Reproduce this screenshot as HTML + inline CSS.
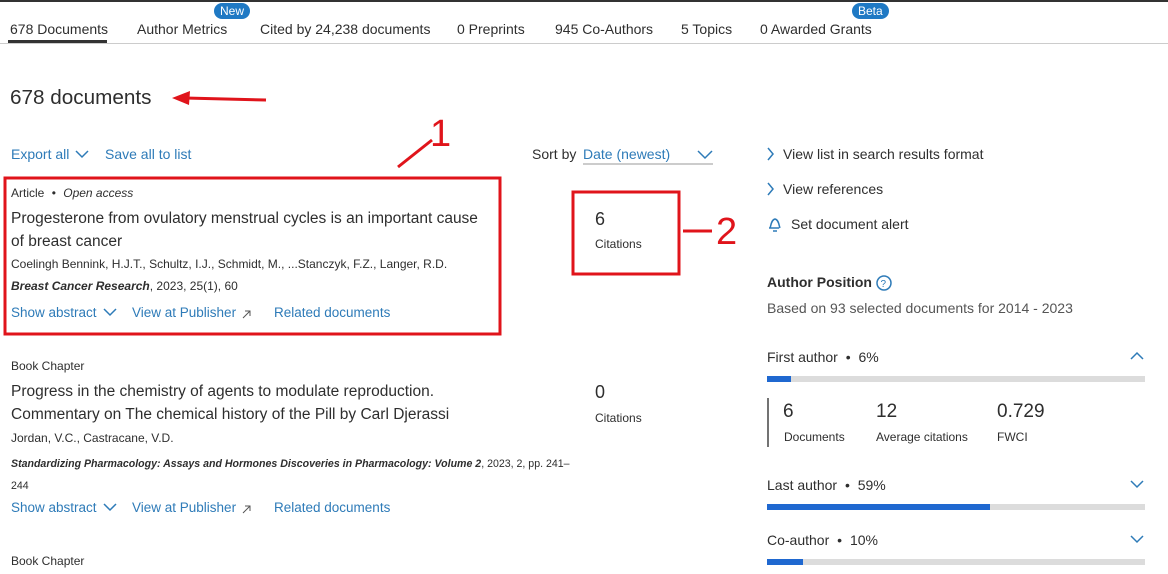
<!DOCTYPE html>
<html><head><meta charset="utf-8"><style>
*{margin:0;padding:0;box-sizing:border-box}
body{width:1168px;height:574px;overflow:hidden;background:#fff;font-family:"Liberation Sans",sans-serif;color:#2e2e2e;position:relative}
.a{position:absolute;white-space:nowrap}
.b{color:#2e7bb8}
.s13{font-size:13px}.s12{font-size:12px}.s14{font-size:14px}
.bar{position:absolute;height:6px;background:#dcdcdc;left:767px;width:378px}
.bar i{display:block;height:6px;background:#1f68d0}
.badge{position:absolute;background:#1f79c4;color:#fff;font-size:12px;border-radius:10px;padding:1px 6px;top:3px}
</style></head><body>
<div class="a" style="left:0;top:0;width:1168px;height:2px;background:#333"></div>
<div class="a s14" style="left:10px;top:21px">678 Documents</div>
<div class="a" style="left:8px;top:40px;width:99px;height:3px;background:#333"></div>
<div class="a s14" style="left:137px;top:21px">Author Metrics</div>
<div class="badge" style="left:214px">New</div>
<div class="a s14" style="left:260px;top:21px">Cited by 24,238 documents</div>
<div class="a s14" style="left:457px;top:21px">0 Preprints</div>
<div class="a s14" style="left:555px;top:21px">945 Co-Authors</div>
<div class="a s14" style="left:681px;top:21px">5 Topics</div>
<div class="a s14" style="left:760px;top:21px">0 Awarded Grants</div>
<div class="badge" style="left:852px">Beta</div>
<div class="a" style="left:0;top:43px;width:1168px;height:1px;background:#ccc"></div>

<div class="a" style="left:10px;top:86px;font-size:20.7px">678 documents</div>
<svg class="a" style="left:0;top:0" width="1168" height="574">
<g stroke="#e0141b" stroke-width="3" fill="#e0141b">
<line x1="266" y1="100" x2="185" y2="98"/><polygon points="172,98 190,91 189,105" stroke="none"/>
<line x1="398" y1="167" x2="432" y2="140"/>
<line x1="683" y1="231" x2="712" y2="231"/>
</g>
<rect x="5" y="178" width="495" height="156" fill="none" stroke="#e0141b" stroke-width="3"/>
<rect x="573" y="192" width="106" height="82" fill="none" stroke="#e0141b" stroke-width="3"/>
<text x="430" y="146" font-size="38" fill="#e0141b" font-family="Liberation Sans">1</text>
<text x="716" y="244" font-size="38" fill="#e0141b" font-family="Liberation Sans">2</text>
<g fill="none" stroke="#2e7bb8" stroke-width="1.5">
<polyline points="76,151 82,157 88,151"/>
<polyline points="104,309 110,315 116,309"/>
<polyline points="104,504 110,510 116,504"/>
<polyline points="698,151 705,158 712,151"/>
<polyline points="768,148 773,154 768,160"/>
<polyline points="768,183 773,189 768,195"/>
<path d="M769 228h10M770 228c1-2 1-8 5-9 4 1 4 7 5 9M773 231h4"/>
<polyline points="1131,359 1137,353 1143,359"/>
<polyline points="1131,481 1137,487 1143,481"/>
<polyline points="1131,536 1137,542 1143,536"/>
<circle cx="884" cy="283" r="7"/>
</g>
<g fill="none" stroke="#555" stroke-width="1"><path d="M243 318l7-7M245 311h5v5"/><path d="M243 513l7-7M245 506h5v5"/></g>
<text x="880.5" y="287" font-size="10" fill="#2e7bb8" font-family="Liberation Sans">?</text>
<line x1="583" y1="164" x2="713" y2="164" stroke="#999"/>
<line x1="768" y1="398" x2="768" y2="447" stroke="#444" stroke-width="1.5"/>
</svg>

<div class="a s14 b" style="left:11px;top:146px">Export all</div>
<div class="a s14 b" style="left:105px;top:146px">Save all to list</div>
<div class="a s14" style="left:532px;top:146px">Sort by</div>
<div class="a s14 b" style="left:583px;top:146px">Date (newest)</div>

<div class="a s12" style="left:11px;top:186px">Article <span style="margin:0 4px">•</span> <i>Open access</i></div>
<div class="a" style="left:11px;top:207px;font-size:15.5px;line-height:23px">Progesterone from ovulatory menstrual cycles is an important cause<br>of breast cancer</div>
<div class="a s12" style="left:11px;top:257px">Coelingh Bennink, H.J.T., Schultz, I.J., Schmidt, M., ...Stanczyk, F.Z., Langer, R.D.</div>
<div class="a s12" style="left:11px;top:279px"><b><i>Breast Cancer Research</i></b>, 2023, 25(1), 60</div>
<div class="a b" style="left:11px;top:305px;font-size:13.5px">Show abstract</div>
<div class="a b" style="left:132px;top:305px;font-size:13.5px">View at Publisher</div>
<div class="a b" style="left:274px;top:305px;font-size:13.5px">Related documents</div>
<div class="a" style="left:595px;top:209px;font-size:18px">6</div>
<div class="a s12" style="left:595px;top:237px">Citations</div>

<div class="a s12" style="left:11px;top:359px">Book Chapter</div>
<div class="a" style="left:11px;top:380px;font-size:15.5px;line-height:23px">Progress in the chemistry of agents to modulate reproduction.<br>Commentary on The chemical history of the Pill by Carl Djerassi</div>
<div class="a s12" style="left:11px;top:431px">Jordan, V.C., Castracane, V.D.</div>
<div class="a" style="left:11px;top:453px;font-size:10.6px;line-height:22px"><b><i>Standardizing Pharmacology: Assays and Hormones Discoveries in Pharmacology: Volume 2</i></b>, 2023, 2, pp. 241–<br>244</div>
<div class="a b" style="left:11px;top:500px;font-size:13.5px">Show abstract</div>
<div class="a b" style="left:132px;top:500px;font-size:13.5px">View at Publisher</div>
<div class="a b" style="left:274px;top:500px;font-size:13.5px">Related documents</div>
<div class="a" style="left:595px;top:382px;font-size:18px">0</div>
<div class="a s12" style="left:595px;top:411px">Citations</div>
<div class="a s12" style="left:11px;top:554px">Book Chapter</div>

<div class="a s14" style="left:783px;top:146px">View list in search results format</div>
<div class="a s14" style="left:783px;top:181px">View references</div>
<div class="a s14" style="left:791px;top:216px">Set document alert</div>
<div class="a s14" style="left:767px;top:274px;font-weight:bold">Author Position</div>
<div class="a s14" style="left:767px;top:300px;color:#555">Based on 93 selected documents for 2014 - 2023</div>
<div class="a s14" style="left:767px;top:349px">First author <span style="margin:0 4px">•</span> 6%</div>
<div class="bar" style="top:376px"><i style="width:24px"></i></div>
<div class="a" style="left:783px;top:401px;font-size:19px">6</div>
<div class="a s12" style="left:784px;top:430px">Documents</div>
<div class="a" style="left:876px;top:401px;font-size:19px">12</div>
<div class="a s12" style="left:876px;top:430px">Average citations</div>
<div class="a" style="left:997px;top:401px;font-size:19px">0.729</div>
<div class="a s12" style="left:997px;top:430px">FWCI</div>
<div class="a s14" style="left:767px;top:477px">Last author <span style="margin:0 4px">•</span> 59%</div>
<div class="bar" style="top:504px"><i style="width:223px"></i></div>
<div class="a s14" style="left:767px;top:532px">Co-author <span style="margin:0 4px">•</span> 10%</div>
<div class="bar" style="top:559px"><i style="width:36px"></i></div>
</body></html>
